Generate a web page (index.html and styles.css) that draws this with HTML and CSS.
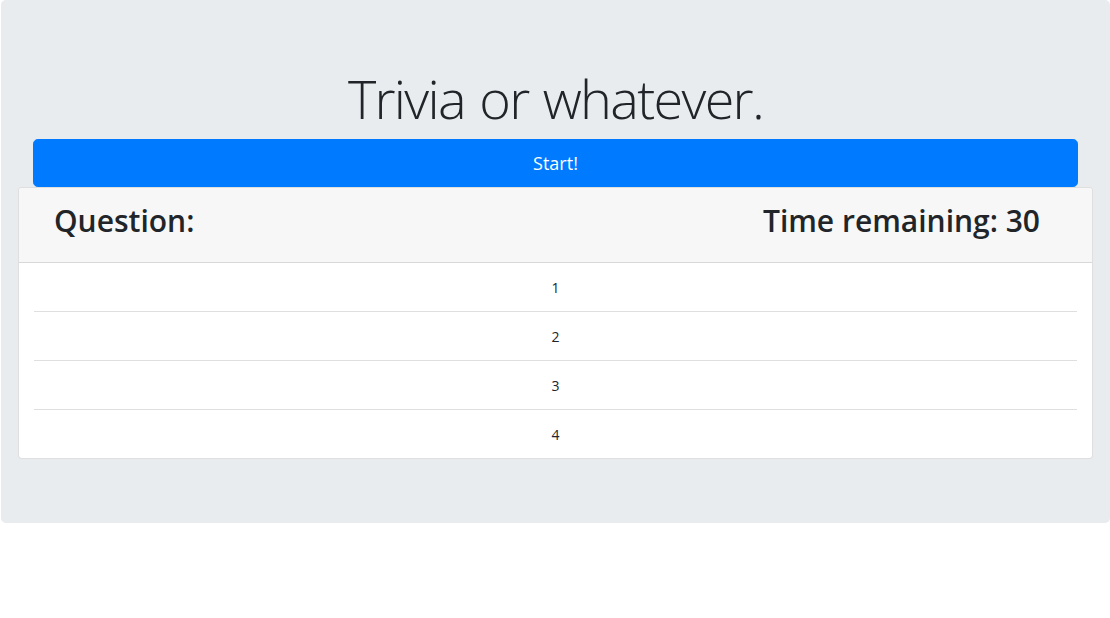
FILE: index.html
```html
<!DOCTYPE html>
<html lang="en">
<head>
<meta charset="utf-8">
<title>Trivia</title>
<link rel="stylesheet" href="styles.css">
</head>
<body>
<div class="jumbotron">
  <h1 class="title">Trivia or whatever.</h1>
  <button class="start-btn" type="button">Start!</button>
  <div class="row">
    <div class="card">
      <div class="card-header">
        <h2 class="head-text">Question:</h2>
        <h2 class="head-text">Time remaining: 30</h2>
      </div>
      <ul class="answers">
        <li class="answer">1</li>
        <li class="answer">2</li>
        <li class="answer">3</li>
        <li class="answer">4</li>
      </ul>
    </div>
  </div>
</div>
</body>
</html>
```
FILE: styles.css
```css
* { box-sizing: border-box; }
html, body { margin: 0; padding: 0; }
body {
  font-family: "Open Sans", "Noto Sans", "Liberation Sans", sans-serif;
  font-size: 16px;
  line-height: 1.5;
  color: #212529;
  background: #fff;
}
.jumbotron {
  margin: 0 0 0 1px;
  padding: 64px 32px;
  background: #e9ecef;
  border-radius: 4.8px;
}
.title {
  margin: 0 0 8px;
  height: 67px;
  font-family: "Open Sans", sans-serif;
  font-size: 54px;
  font-weight: 300;
  line-height: 69px;
  letter-spacing: -1.7px;
  word-spacing: 2px;
  text-align: center;
}
.start-btn {
  display: block;
  width: 100%;
  height: 48px;
  border: 1px solid #007bff;
  border-radius: 4.8px;
  background: #007bff;
  color: #fff;
  font-family: inherit;
  font-size: 18px;
  line-height: 1.5;
  padding: 0;
}
.row {
  margin: 0 -15px;
}
.card {
  background: #fff;
  border: 1px solid rgba(0,0,0,.125);
  border-radius: 4px;
  overflow: hidden;
}
.card-header {
  display: flex;
  justify-content: space-between;
  align-items: center;
  height: 75px;
  padding: 0 52px 9px 35px;
  background: #f7f7f7;
  border-bottom: 1px solid rgba(0,0,0,.125);
}
.head-text {
  margin: 0;
  font-size: 30px;
  font-weight: 600;
  line-height: 1.2;
}
.answers {
  list-style: none;
  margin: 0 15px;
  padding: 0;
}
.answer {
  height: 49px;
  padding: 13px 20px 11px;
  font-size: 14px;
  line-height: 24px;
  text-align: center;
  border-bottom: 1px solid rgba(0,0,0,.125);
}
.answer:last-child { border-bottom: 0; height: 48px; }
```
